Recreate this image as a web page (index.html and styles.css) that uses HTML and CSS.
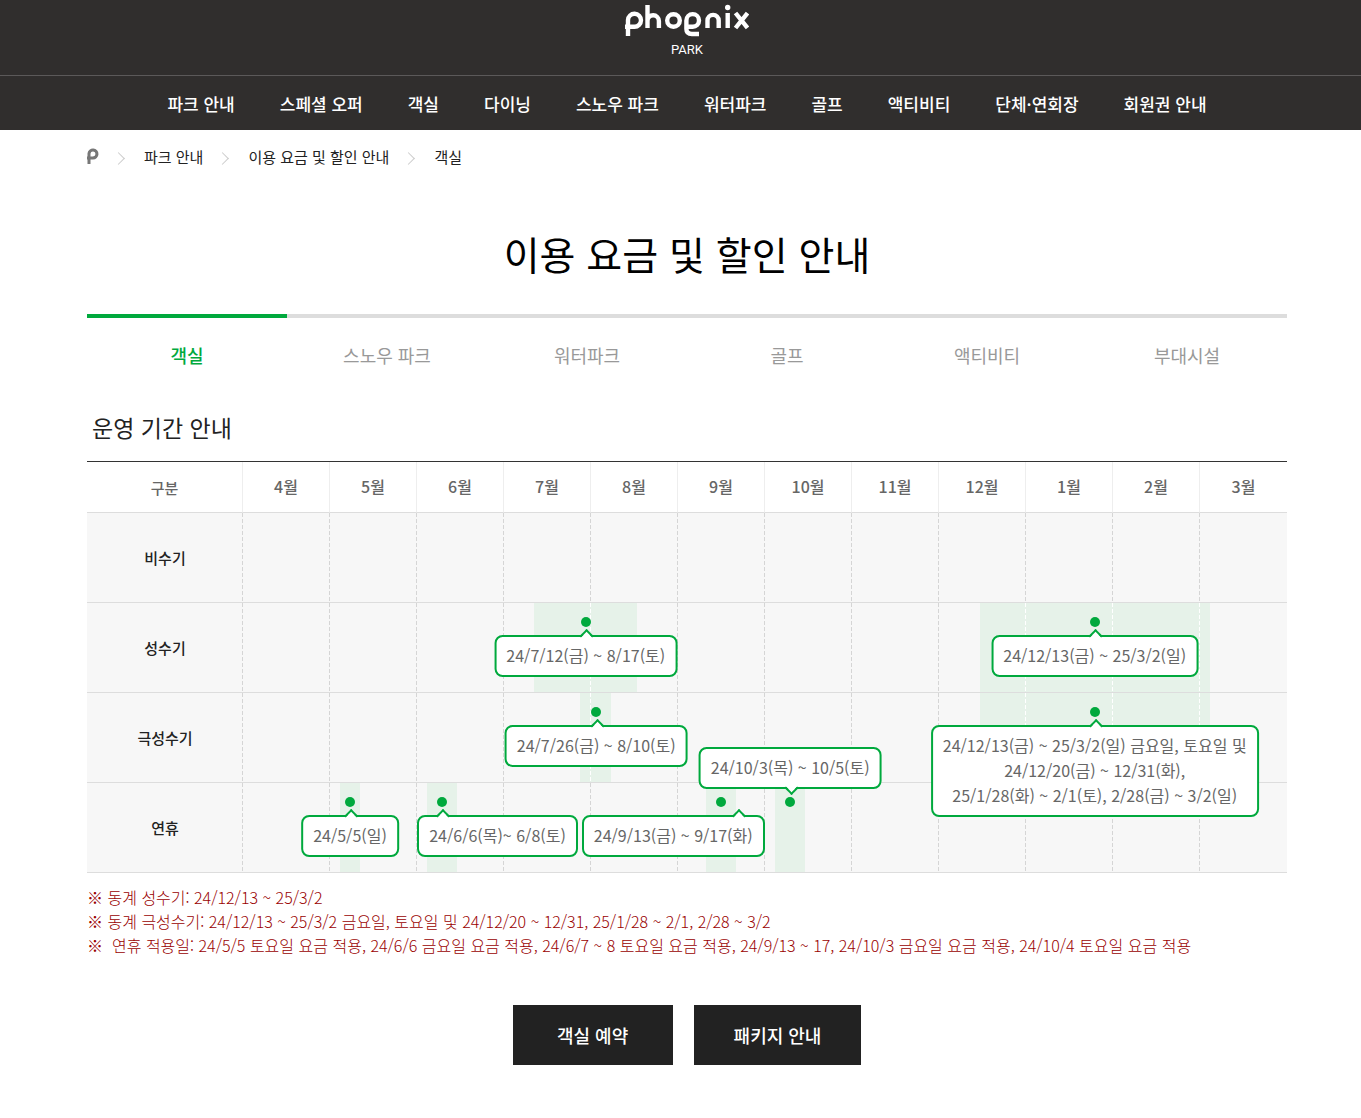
FILE: index.html
```html
<!DOCTYPE html>
<html lang="ko">
<head>
  <meta charset="UTF-8" />
  <meta name="viewport" content="width=device-width, initial-scale=1" />
  <title>이용 요금 및 할인 안내</title>
  <link rel="stylesheet" href="styles.css">
</head>
<body>

  <header>
    <a href="#" class="logo" aria-label="phoenix PARK">
      <svg width="124" height="34" viewBox="0 0 124 34" fill="none" stroke="#fff" stroke-width="4.4">
        <path d="M3 32V16a6.5 6.5 0 1 1 6.5 6.7H0" />
        <path d="M22.5 1V24M22.5 17a5.7 5.7 0 0 1 11.4 0V24" />
        <circle cx="48.5" cy="16.5" r="6.3" />
        <path d="M62 22.7h5.7a6.3 6.3 0 1 0-6.3-6.3V25c0 3.500 2 5 5.500 5H74" />
        <path d="M82.5 24V16.500a5.600 5.600 0 0 1 11.200 0V24" />
        <path d="M102.7 9V24M110.5 9L122.5 24M122.5 9L110.5 24" />
        <circle cx="102.7" cy="3.5" r="2.7" fill="#fff" stroke="none" />
      </svg>
      <span>PARK</span>
    </a>
    <nav>
      <a href="#">파크 안내</a>
      <a href="#">스페셜 오퍼</a>
      <a href="#">객실</a>
      <a href="#">다이닝</a>
      <a href="#">스노우 파크</a>
      <a href="#">워터파크</a>
      <a href="#">골프</a>
      <a href="#">액티비티</a>
      <a href="#">단체·연회장</a>
      <a href="#">회원권 안내</a>
    </nav>
  </header>

  <main>
    <div class="container">
      <div class="breadcrumb">
        <a href="#" aria-label="홈">
          <svg width="12" height="16" viewBox="0 0 12 16" fill="none" stroke="#777" stroke-width="3">
            <path d="M2 16V5.500a4 4 0 1 1 4 4.500H0" />
          </svg>
        </a>
        <a href="#">파크 안내</a>
        <a href="#">이용 요금 및 할인 안내</a>
        <a href="#">객실</a>
      </div>

      <h1>이용 요금 및 할인 안내</h1>

      <div class="tabs">
        <a href="#" class="active">객실</a>
        <a href="#">스노우 파크</a>
        <a href="#">워터파크</a>
        <a href="#">골프</a>
        <a href="#">액티비티</a>
        <a href="#">부대시설</a>
      </div>

      <h2>운영 기간 안내</h2>

      <table>
        <thead>
          <tr>
            <th class="label">구분</th>
            <th>4월</th><th>5월</th><th>6월</th><th>7월</th><th>8월</th><th>9월</th>
            <th>10월</th><th>11월</th><th>12월</th><th>1월</th><th>2월</th><th>3월</th>
          </tr>
        </thead>
        <!-- --from / --to: part of the month that is filled, --at: place of the dot -->
        <tbody>
          <tr>
            <th>비수기</th>
            <td></td><td></td><td></td><td></td><td></td><td></td>
            <td></td><td></td><td></td><td></td><td></td><td></td>
          </tr>
          <tr>
            <th>성수기</th>
            <td></td><td></td><td></td>
            <td class="fill on" style="--from:34%">
              <div class="event" style="--at:94%"><p class="bubble">24/7/12(금) ~ 8/17(토)</p></div>
            </td>
            <td class="fill" style="--to:53%"></td>
            <td></td><td></td><td></td>
            <td class="fill on" style="--from:47%"></td>
            <td class="fill on">
              <div class="event" style="--at:79%"><p class="bubble">24/12/13(금) ~ 25/3/2(일)</p></div>
            </td>
            <td class="fill on"></td>
            <td class="fill" style="--to:11%"></td>
          </tr>
          <tr>
            <th>극성수기</th>
            <td></td><td></td><td></td>
            <td class="fill on" style="--from:87%"></td>
            <td class="fill" style="--to:23%">
              <div class="event" style="--at:6%"><p class="bubble">24/7/26(금) ~ 8/10(토)</p></div>
            </td>
            <td></td><td></td><td></td>
            <td class="fill on" style="--from:47%"></td>
            <td class="fill on">
              <div class="event" style="--at:79%">
                <p class="bubble">24/12/13(금) ~ 25/3/2(일) 금요일, 토요일 및<br>24/12/20(금) ~ 12/31(화),<br>25/1/28(화) ~ 2/1(토), 2/28(금) ~ 3/2(일)</p>
              </div>
            </td>
            <td class="fill on"></td>
            <td class="fill" style="--to:11%"></td>
          </tr>
          <tr>
            <th>연휴</th>
            <td></td>
            <td class="fill" style="--from:12%; --to:34%">
              <div class="event" style="--at:23%"><p class="bubble">24/5/5(일)</p></div>
            </td>
            <td class="fill" style="--from:12%; --to:46%">
              <div class="event" style="--at:29%"><p class="bubble start">24/6/6(목)~ 6/8(토)</p></div>
            </td>
            <td></td><td></td>
            <td class="fill" style="--from:32%; --to:67%">
              <div class="event" style="--at:49%"><p class="bubble end">24/9/13(금) ~ 9/17(화)</p></div>
            </td>
            <td class="fill" style="--from:12%; --to:46%">
              <div class="event" style="--at:29%"><p class="bubble above">24/10/3(목) ~ 10/5(토)</p></div>
            </td>
            <td></td><td></td><td></td><td></td><td></td>
          </tr>
        </tbody>
      </table>

      <div class="notes">
        <p>※ 동계 성수기: 24/12/13 ~ 25/3/2</p>
        <p>※ 동계 극성수기: 24/12/13 ~ 25/3/2 금요일, 토요일 및 24/12/20 ~ 12/31, 25/1/28 ~ 2/1, 2/28 ~ 3/2</p>
        <p>※&nbsp; 연휴 적용일: 24/5/5 토요일 요금 적용, 24/6/6 금요일 요금 적용, 24/6/7 ~ 8 토요일 요금 적용, 24/9/13 ~ 17, 24/10/3 금요일 요금 적용, 24/10/4 토요일 요금 적용</p>
      </div>

      <div class="buttons">
        <a href="#">객실 예약</a>
        <a href="#">패키지 안내</a>
      </div>
    </div>
  </main>

</body>
</html>
```
FILE: styles.css
```css
* {
  box-sizing: border-box;
}

body {
  margin: 0;
  font-family: 'Noto Sans CJK KR', 'Noto Sans', sans-serif;
  font-size: 16px;
  color: #222;
  background: #fff;
}

h1, h2, p {
  margin: 0;
}

a {
  color: inherit;
  text-decoration: none;
}

header {
  background: #302e2d;
  color: #fff;
}

.logo {
  display: flex;
  flex-direction: column;
  align-items: center;
  height: 76px;
  padding: 4px 0 0 13px;
  border-bottom: 1px solid #5b5959;
}

.logo span {
  font-family: Roboto, sans-serif;
  font-size: 13px;
  font-weight: 400;
  line-height: 23px;
}

nav {
  display: flex;
  justify-content: center;
  gap: 45px;
  padding: 15px 0 13px 13px;
  font-size: 17px;
  font-weight: 500;
  line-height: 26px;
}

main {
  padding-left: 13px;
}

.container {
  max-width: 1200px;
  margin: 0 auto;
}

.breadcrumb {
  display: flex;
  align-items: center;
  height: 52px;
  font-size: 15px;
}

.breadcrumb svg {
  display: block;
}

.breadcrumb a + a::before {
  content: "";
  display: inline-block;
  width: 8px;
  height: 8px;
  margin: 0 21px 0 15px;
  border: solid #ccc;
  border-width: 1px 1px 0 0;
  transform: rotate(45deg);
}

h1 {
  margin-top: 39px;
  font-size: 39px;
  font-weight: 400;
  line-height: 64px;
  text-align: center;
  color: #000;
}

.tabs {
  display: flex;
  margin-top: 29px;
}

.tabs a {
  flex: 1;
  padding-top: 23px;
  border-top: 4px solid #ddd;
  font-size: 18px;
  line-height: 28px;
  text-align: center;
  color: #999;
}

.tabs .active {
  border-color: #00a93d;
  color: #00a93d;
  font-weight: 500;
}

h2 {
  margin: 40px 0 15px;
  padding-left: 5px;
  font-size: 23px;
  font-weight: 400;
  line-height: 37px;
}

table {
  width: 100%;
  table-layout: fixed;
  border-collapse: separate;
  border-spacing: 0;
  border-top: 1px solid #333;
}

th, td {
  height: 90px;
  padding: 0;
  border-bottom: 1px solid #ddd;
  font-weight: 500;
}

thead th {
  height: 51px;
  padding-bottom: 2px;
  border-right: 1px solid #eee;
  color: #666;
}

thead th:last-child {
  border-right: 0;
}

thead .label {
  width: 13%;
  padding-bottom: 0;
  font-size: 15px;
}

tbody th {
  font-size: 15px;
}

tbody tr {
  background: #f7f7f7;
}

tbody th, td {
  --line: #d5d5d5;
  --dash: repeating-linear-gradient(to bottom, var(--line) 0 4px, transparent 4px 6px) right / 1px 100% no-repeat;
  background: var(--dash);
}

td {
  position: relative;
}

td:last-child {
  background: none;
}

.fill {
  background: var(--dash), linear-gradient(to right, transparent var(--from, 0%), #e6f2e9 var(--from, 0%) var(--to, 100%), transparent var(--to, 100%));
}

td.fill:last-child {
  background: linear-gradient(to right, #e6f2e9 var(--to), transparent var(--to));
}

.on {
  --line: #fff;
}

.event {
  position: absolute;
  top: 14px;
  left: var(--at);
  z-index: 1;
}

.event::before {
  content: "";
  position: absolute;
  left: -5px;
  width: 10px;
  height: 10px;
  border-radius: 50%;
  background: #00a93d;
}

.bubble {
  position: absolute;
  top: 18px;
  left: 0;
  transform: translateX(-50%);
  padding: 6px 10px 7px;
  border: 2px solid #00a93d;
  border-radius: 8px;
  background: #fff;
  color: #666;
  font-weight: 400;
  line-height: 25px;
  text-align: center;
  white-space: nowrap;
}

.bubble::before {
  content: "";
  position: absolute;
  top: -6px;
  left: 50%;
  width: 8px;
  height: 8px;
  margin-left: -4px;
  border: solid #00a93d;
  border-width: 2px 0 0 2px;
  background: linear-gradient(135deg, #fff 50%, transparent 50%);
  transform: rotate(45deg);
}

.start {
  left: -25px;
  transform: none;
}

.start::before {
  left: 23px;
}

.end {
  left: auto;
  right: -44px;
  transform: none;
}

.end::before {
  left: auto;
  right: 19px;
}

.above {
  top: auto;
  bottom: 8px;
}

.above::before {
  top: auto;
  bottom: -6px;
  transform: rotate(225deg);
}

.notes {
  padding: 12px 0 0;
  font-size: 16px;
  font-weight: 300;
  line-height: 24px;
  color: #900;
}

.buttons {
  display: flex;
  justify-content: center;
  gap: 21px;
  padding: 48px 0 53px;
}

.buttons a {
  min-width: 160px;
  padding: 0 40px;
  background: #222;
  color: #fff;
  font-size: 18px;
  font-weight: 500;
  line-height: 60px;
  text-align: center;
}
```
